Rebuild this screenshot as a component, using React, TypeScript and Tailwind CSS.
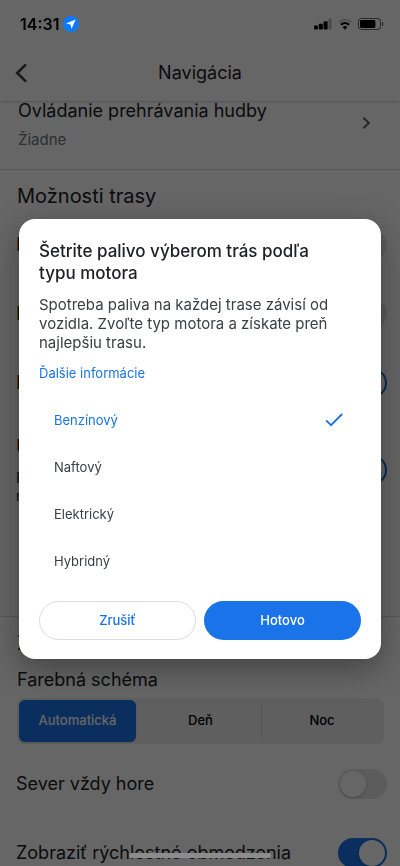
import { useState } from 'react';

interface ToggleRowProps {
  id: string;
  label: string;
  checked: boolean;
  onChange: (checked: boolean) => void;
}

interface ToggleProps {
  id: string;
  checked: boolean;
  onChange: (checked: boolean) => void;
}

const ENGINES = ['Benzínový', 'Naftový', 'Elektrický', 'Hybridný'];
const SCHEMES = ['Automatická', 'Deň', 'Noc'];

const StatusBar = () => (
  <div className="flex h-12 items-center justify-between pl-5 pr-4">
    <div className="flex items-center gap-1">
      <span className="text-base font-semibold leading-5 text-black">14:31</span>
      <svg width="16" height="16" viewBox="0 0 16 16" aria-hidden="true">
        <circle cx="8" cy="8" r="8" fill="#0a7aff" />
        <path d="M12.6 3.6 3 7.6l4.5 1 1 4.4z" fill="#fff" />
      </svg>
    </div>
    <div className="flex items-center gap-[6px]">
      <svg width="18" height="12" viewBox="0 0 18 12" aria-hidden="true">
        <rect x="0" y="7.5" width="4" height="4" rx="1" />
        <rect x="4.8" y="5.8" width="4" height="5.7" rx="1" />
        <rect x="9.6" y="3.2" width="4" height="8.3" rx="1" />
        <rect x="14.4" y="0.6" width="3.4" height="10.9" rx="1" opacity="0.25" />
      </svg>
      <svg width="14" height="12" viewBox="0 0 14 12" fill="none" stroke="#000" aria-hidden="true">
        <path d="M0.8 4.2a9 9 0 0 1 12.4 0" strokeWidth="2" opacity="0.2" />
        <path d="M2.9 6.7a6 6 0 0 1 8.2 0" strokeWidth="2.2" />
        <path d="M7 11.8 4.7 9.3a3.2 3.2 0 0 1 4.6 0z" fill="#000" stroke="none" />
      </svg>
      <svg width="26" height="12" viewBox="0 0 26 12" aria-hidden="true">
        <rect x="0.5" y="0.5" width="22" height="11" rx="3" fill="none" stroke="#000" opacity="0.6" />
        <rect x="2" y="2" width="15.4" height="8" rx="1.4" />
        <path d="M24 4v4a2.1 2.1 0 0 0 0-4z" opacity="0.6" />
      </svg>
    </div>
  </div>
);

const Toggle = ({ id, checked, onChange }: ToggleProps) => (
  <input
    id={id}
    type="checkbox"
    checked={checked}
    onChange={(e) => onChange(e.target.checked)}
    className="flex h-[30px] w-[49px] shrink-0 cursor-pointer appearance-none items-center rounded-full bg-[#e6e6e8] px-[2px] before:size-[26px] before:rounded-full before:bg-white before:shadow-[0_1px_3px_rgba(0,0,0,0.2)] checked:justify-end checked:bg-[#1a73e8]"
  />
);

const ToggleRow = ({ id, label, checked, onChange }: ToggleRowProps) => (
  <div className="flex h-[69px] items-center justify-between pl-4 pr-[13px]">
    <label htmlFor={id} className="whitespace-nowrap text-lg leading-6">
      {label}
    </label>
    <Toggle id={id} checked={checked} onChange={onChange} />
  </div>
);

const EngineDialog = () => {
  const [engine, setEngine] = useState('Benzínový');

  return (
    <div className="fixed inset-0 z-10 flex items-center justify-center px-[19px] pt-3">
      <div
        role="dialog"
        aria-modal="true"
        aria-labelledby="engine-title"
        className="w-full max-w-md rounded-2xl bg-white px-5 pb-[19px] pt-[21px] shadow-[0_10px_32px_rgba(0,0,0,0.35)]"
      >
        <h2 id="engine-title" className="pr-5 text-[17px] font-medium leading-[22px] text-[#202124]">
          Šetrite palivo výberom trás podľa typu motora
        </h2>
        <p className="mt-[11px] text-[15px] leading-[19px] text-[#3c4043]">
          Spotreba paliva na každej trase závisí od vozidla. Zvoľte typ motora a získate preň
          najlepšiu trasu.
        </p>
        <a href="#info" className="mt-[11px] block text-[13px] leading-5 text-[#1a73e8]">
          Ďalšie informácie
        </a>

        <fieldset className="mt-[14px]">
          {ENGINES.map((name) => (
            <label
              key={name}
              className="flex h-[47px] cursor-pointer items-center justify-between px-[15px] text-[13px] text-[#3c4043] has-checked:text-[#1a73e8]"
            >
              <input
                type="radio"
                name="engine"
                checked={engine === name}
                onChange={() => setEngine(name)}
                className="sr-only"
              />
              {name}
              {engine === name && (
                <svg width="24" height="24" viewBox="0 0 24 24" fill="none" stroke="currentColor" strokeWidth="1.8" aria-hidden="true">
                  <path d="M4.2 11.4 9 16.2 20.2 5" />
                </svg>
              )}
            </label>
          ))}
        </fieldset>

        <div className="mt-4 grid grid-cols-2 gap-2">
          <button className="h-[39px] rounded-full border border-[#dadce0] text-[13px] font-medium text-[#1a73e8]">
            Zrušiť
          </button>
          <button className="h-[39px] rounded-full bg-[#1a73e8] text-[13px] font-medium text-white">
            Hotovo
          </button>
        </div>
      </div>
    </div>
  );
};

export default function App() {
  const [scheme, setScheme] = useState('Automatická');
  const [settings, setSettings] = useState({
    highways: false,
    tolls: false,
    ferries: true,
    eco: true,
    north: false,
    limits: true,
  });

  const update = (key: keyof typeof settings) => (checked: boolean) =>
    setSettings((prev) => ({ ...prev, [key]: checked }));

  return (
    <div className="bg-black font-['Inter',sans-serif] text-[#202124] antialiased">
      {/* dimmed while the dialog is open */}
      <div className="flex h-screen flex-col overflow-hidden bg-white opacity-40 will-change-[opacity]">
        <header className="relative shrink-0 shadow-[0_0_3px_rgba(0,0,0,0.35)]">
          <div className="h-12" />
          <div className="grid h-[53px] grid-cols-[48px_1fr_48px] items-center pb-[3px]">
            <button aria-label="Späť" className="pl-[15px]">
              <svg width="13" height="20" viewBox="0 0 13 20" fill="none" stroke="#3c4043" strokeWidth="2.6">
                <path d="M11 1.4 2.2 10 11 18.6" />
              </svg>
            </button>
            <h1 className="text-center text-lg leading-6">Navigácia</h1>
          </div>
        </header>

        <main className="min-h-0 flex-1 overflow-hidden">
          <a href="#music" className="flex h-[69px] items-start justify-between border-b border-[#dcdcde] pl-[18px] pr-[29px]">
            <span>
              <span className="block text-lg leading-5">Ovládanie prehrávania hudby</span>
              <span className="mt-[9px] block text-[15px] leading-5 text-[#70757a]">Žiadne</span>
            </span>
            <svg width="9" height="14" viewBox="0 0 9 14" fill="none" stroke="#5f6368" strokeWidth="2" className="mt-[15px]" aria-hidden="true">
              <path d="M1.4 1.8 6.8 7l-5.4 5.2" />
            </svg>
          </a>

          <section className="border-b border-[#dcdcde]">
            <h2 className="pl-[17px] pt-3 text-xl leading-7">Možnosti trasy</h2>
            <ToggleRow id="highways" label="Nepoužívať diaľnice" checked={settings.highways} onChange={update('highways')} />
            <ToggleRow id="tolls" label="Nepoužívať platené cesty" checked={settings.tolls} onChange={update('tolls')} />
            <ToggleRow id="ferries" label="Nepoužívať trajekty" checked={settings.ferries} onChange={update('ferries')} />
            <div className="flex h-[199px] items-start justify-between gap-4 pl-4 pr-[13px] pt-5">
              <div className="w-64">
                <label htmlFor="eco" className="block whitespace-nowrap text-lg leading-5">
                  Uprednostniť úsporné trasy
                </label>
                <p className="mt-3 text-sm leading-[18px]">
                  Pri podobnom čase príchodu
                  <br />
                  navrhne úspornejšiu trasu
                </p>
              </div>
              <div className="pt-[18px]">
                <Toggle id="eco" checked={settings.eco} onChange={update('eco')} />
              </div>
            </div>
          </section>

          <section>
            <h2 className="pl-[17px] pt-3 text-xl leading-7">Zobrazenie mapy</h2>
            <h3 className="mt-[11px] pl-[17px] text-lg leading-6">Farebná schéma</h3>
            <div className="mb-[5px] ml-[17px] mr-4 mt-[6px] grid h-[46px] grid-cols-3 rounded-lg bg-[#eeeeef] p-[2px]">
              {SCHEMES.map((name) => (
                <button
                  key={name}
                  onClick={() => setScheme(name)}
                  className={
                    scheme === name
                      ? 'mr-1 rounded-md bg-[#1a73e8] text-[13px] font-medium text-white shadow-sm'
                      : 'my-1 text-[13px] font-medium text-black last:border-l last:border-[#d0d0d2]'
                  }
                >
                  {name}
                </button>
              ))}
            </div>
            <ToggleRow id="north" label="Sever vždy hore" checked={settings.north} onChange={update('north')} />
            <ToggleRow id="limits" label="Zobraziť rýchlostné obmedzenia" checked={settings.limits} onChange={update('limits')} />
          </section>
        </main>
      </div>

      <EngineDialog />

      {/* system chrome is never dimmed */}
      <div className="fixed inset-x-0 top-0 z-20">
        <StatusBar />
      </div>
      <div className="fixed inset-x-0 bottom-2 z-20 flex justify-center">
        <div className="h-[5px] w-[142px] rounded-full bg-[#8c8c8c]" />
      </div>
    </div>
  );
}
